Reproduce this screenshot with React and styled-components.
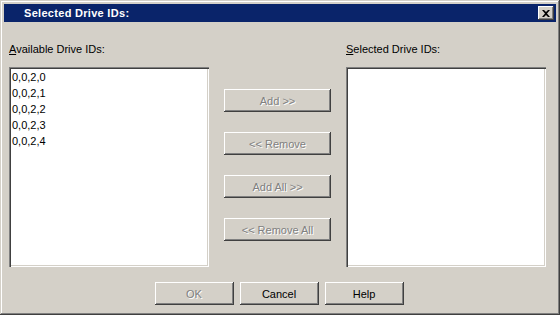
import styled, { createGlobalStyle } from 'styled-components'

const GlobalStyle = createGlobalStyle`
  html, body {
    margin: 0;
    padding: 0;
    background: #d4d0c8;
  }
  * {
    box-sizing: border-box;
  }
`

const Window = styled.div`
  width: 560px;
  height: 315px;
  padding: 4px;
  background: #d4d0c8;
  display: flex;
  flex-direction: column;
  font-family: "Liberation Sans", Arial, sans-serif;
  font-size: 11px;
  color: #000;
  box-shadow: inset -1px -1px #404040, inset 1px 1px #d4d0c8,
    inset -2px -2px #808080, inset 2px 2px #fff;
`

const TitleBar = styled.div`
  height: 18px;
  background: #0a246a;
  color: #fff;
  font-weight: bold;
  letter-spacing: 0.3px;
  display: flex;
  align-items: center;
  justify-content: space-between;
  padding: 0 2px 0 20px;
`

const CloseButton = styled.div`
  width: 16px;
  height: 14px;
  background: #d4d0c8;
  display: flex;
  align-items: center;
  justify-content: center;
  box-shadow: inset -1px -1px #404040, inset 1px 1px #fff,
    inset -2px -2px #808080, inset 2px 2px #d4d0c8;
`

const Main = styled.div`
  display: flex;
  padding: 21px 0 0 5px;
`

const Column = styled.div`
  width: 200px;
  display: flex;
  flex-direction: column;
`

const Label = styled.div`
  line-height: 13px;
  height: 13px;
  margin-bottom: 11px;
  white-space: nowrap;
`

const ListBox = styled.div`
  height: 200px;
  background: #fff;
  padding: 2px 3px;
  box-shadow: inset 1px 1px #808080, inset 2px 2px #404040,
    inset -1px -1px #fff, inset -2px -2px #d4d0c8;
`

const Item = styled.div`
  line-height: 16px;
  height: 16px;
`

const ButtonColumn = styled.div`
  width: 107px;
  margin: 0 15px;
  padding-top: 46px;
  display: flex;
  flex-direction: column;
  gap: 20px;
`

const Button = styled.button`
  width: ${(p) => p.$width || 107}px;
  height: 23px;
  padding: 0;
  border: none;
  background: #d4d0c8;
  font-family: inherit;
  font-size: 11px;
  font-weight: normal;
  color: ${(p) => (p.disabled ? '#808080' : '#000')};
  text-shadow: ${(p) => (p.disabled ? '1px 1px #fff' : 'none')};
  box-shadow: inset -1px -1px #404040, inset 1px 1px #fff,
    inset -2px -2px #808080, inset 2px 2px #d4d0c8;
`

const Footer = styled.div`
  display: flex;
  justify-content: center;
  gap: 6px;
  margin-top: 15px;
  padding-right: 2px;
`

const drives = ['0,0,2,0', '0,0,2,1', '0,0,2,2', '0,0,2,3', '0,0,2,4']

export default function App() {
  return (
    <>
      <GlobalStyle />
      <Window>
        <TitleBar>
          <span>Selected Drive IDs:</span>
          <CloseButton>
            <svg width="8" height="7" viewBox="0 0 8 7">
              <path d="M0 0h2l2 2 2-2h2L5 3.5 8 7H6L4 5 2 7H0l3-3.5z" fill="#000" />
            </svg>
          </CloseButton>
        </TitleBar>
        <Main>
          <Column>
            <Label>
              <u>A</u>vailable Drive IDs:
            </Label>
            <ListBox>
              {drives.map((d) => (
                <Item key={d}>{d}</Item>
              ))}
            </ListBox>
          </Column>
          <ButtonColumn>
            <Button disabled>Add &gt;&gt;</Button>
            <Button disabled>&lt;&lt; Remove</Button>
            <Button disabled>Add All &gt;&gt;</Button>
            <Button disabled>&lt;&lt; Remove All</Button>
          </ButtonColumn>
          <Column>
            <Label>
              <u>S</u>elected Drive IDs:
            </Label>
            <ListBox />
          </Column>
        </Main>
        <Footer>
          <Button $width={79} disabled>OK</Button>
          <Button $width={79}>Cancel</Button>
          <Button $width={79}>Help</Button>
        </Footer>
      </Window>
    </>
  )
}
